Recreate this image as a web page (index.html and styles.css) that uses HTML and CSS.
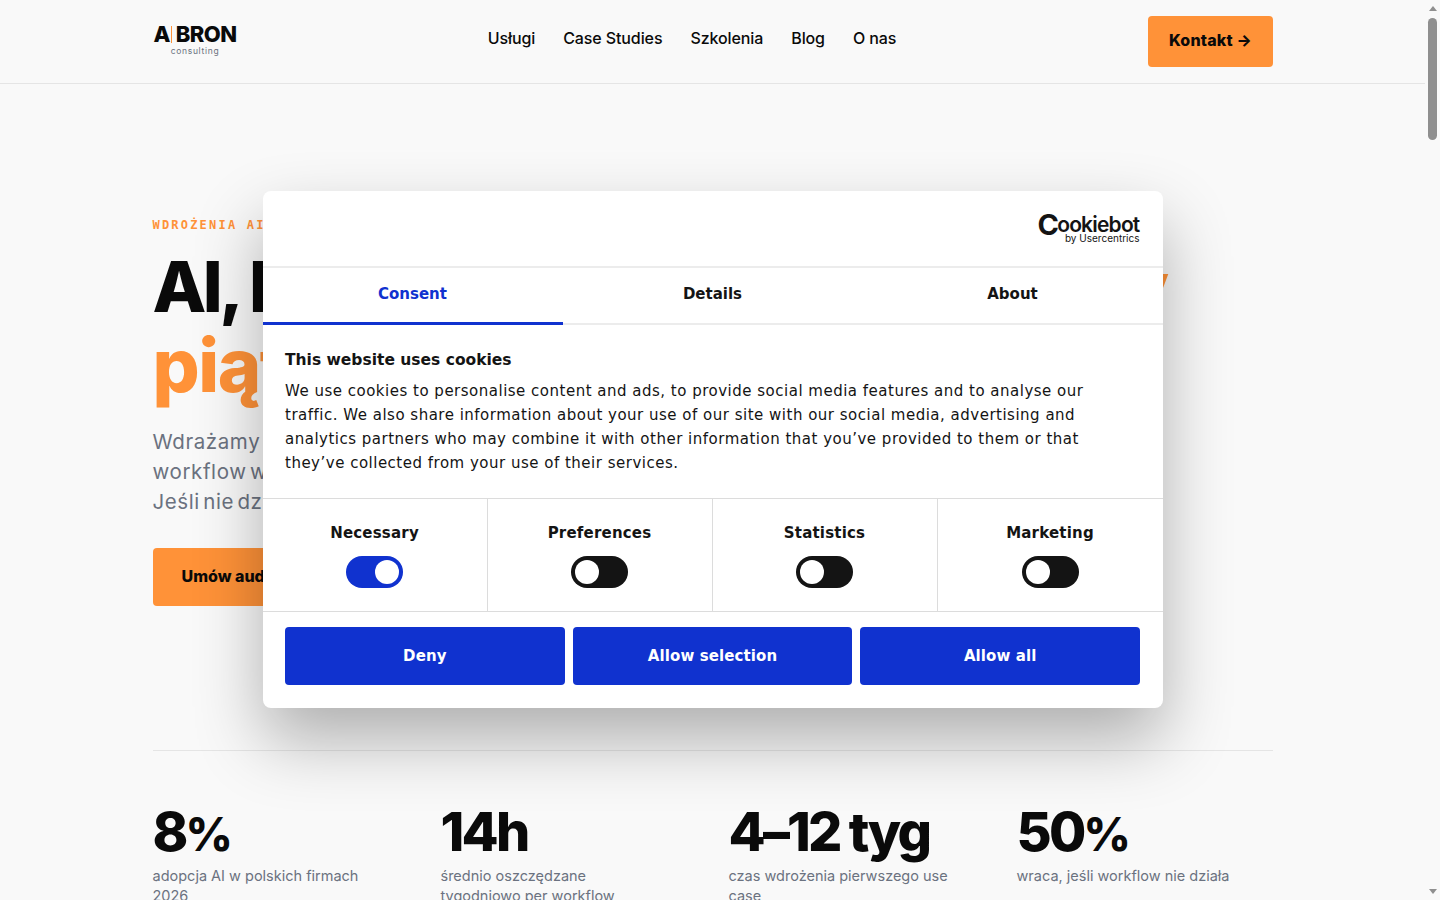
FILE: index.html
```html
<!DOCTYPE html>
<html lang="pl">
<head>
  <meta charset="UTF-8" />
  <meta name="viewport" content="width=device-width, initial-scale=1.0" />
  <title>AIBRON consulting</title>
  <link rel="stylesheet" href="styles.css">
</head>
<body>
  <div class="page">
    <header class="topbar">
      <div class="topbar-inner">
        <a class="logo" href="#">
          <span class="logo-mark">A<span class="logo-bar"></span>BRON</span>
          <span class="logo-sub">consulting</span>
        </a>
        <nav class="nav">
          <a href="#">Usługi</a>
          <a href="#">Case Studies</a>
          <a href="#">Szkolenia</a>
          <a href="#">Blog</a>
          <a href="#">O nas</a>
        </nav>
        <a class="btn-contact" href="#">Kontakt →</a>
      </div>
    </header>

    <main class="wrap">
      <section class="hero">
        <div class="eyebrow">WDROŻENIA AI DLA FIRM</div>
        <h1>AI, które daje Ci <span class="accent">naprawdę wolny<br><span class="line-two">piątek</span></span></h1>
        <p class="lead">Wdrażamy AI w Twoich procesach, tak aby<br>workflow w końcu działał i oszczędzał czas.<br>Jeśli nie działa, zwracamy 50%.</p>
        <a class="btn-hero" href="#">Umów audyt AI →</a>
      </section>

      <section class="stats">
        <div class="stat">
          <div class="stat-num">8<span class="pct">%</span></div>
          <div class="stat-label">adopcja AI w polskich firmach<br>2026</div>
        </div>
        <div class="stat">
          <div class="stat-num">14h</div>
          <div class="stat-label">średnio oszczędzane<br>tygodniowo per workflow</div>
        </div>
        <div class="stat">
          <div class="stat-num">4–12 tyg</div>
          <div class="stat-label">czas wdrożenia pierwszego use<br>case</div>
        </div>
        <div class="stat">
          <div class="stat-num">50<span class="pct">%</span></div>
          <div class="stat-label">wraca, jeśli workflow nie działa</div>
        </div>
      </section>
    </main>

    <div class="overlay">
      <div class="cookie-dialog">
        <div class="cookie-head">
          <div class="cb-logo">
            <span class="cb-name"><span class="cb-c">C</span>ookiebot</span>
            <span class="cb-by">by Usercentrics</span>
          </div>
        </div>
        <div class="cookie-tabs">
          <div class="cookie-tab active">Consent</div>
          <div class="cookie-tab">Details</div>
          <div class="cookie-tab">About</div>
        </div>
        <div class="cookie-body">
          <div class="cookie-title">This website uses cookies</div>
          <p class="cookie-text">We use cookies to personalise content and ads, to provide social media features and to analyse our traffic. We also share information about your use of our site with our social media, advertising and analytics partners who may combine it with other information that you’ve provided to them or that they’ve collected from your use of their services.</p>
        </div>
        <div class="cookie-toggles">
          <div class="toggle-cell">
            <div class="toggle-name">Necessary</div>
            <span class="toggle on"></span>
          </div>
          <div class="toggle-cell">
            <div class="toggle-name">Preferences</div>
            <span class="toggle"></span>
          </div>
          <div class="toggle-cell">
            <div class="toggle-name">Statistics</div>
            <span class="toggle"></span>
          </div>
          <div class="toggle-cell">
            <div class="toggle-name">Marketing</div>
            <span class="toggle"></span>
          </div>
        </div>
        <div class="cookie-actions">
          <button>Deny</button>
          <button>Allow selection</button>
          <button>Allow all</button>
        </div>
      </div>
    </div>
  </div>

  <div class="scrollbar">
    <span class="arrow-up"></span>
    <span class="thumb"></span>
    <span class="arrow-down"></span>
  </div>
</body>
</html>
```

FILE: styles.css
```css
* {
  box-sizing: border-box;
}
html, body {
  height: 100%;
}
body {
  margin: 0;
  display: flex;
  overflow: hidden;
  font-family: 'Inter', 'Noto Sans', sans-serif;
  background: #f9f9f9;
  color: #0a0a0a;
}
a {
  color: inherit;
  text-decoration: none;
}
.page {
  position: relative;
  flex: 1;
  min-width: 0;
  height: 100%;
  overflow: hidden;
}

/* top bar */
.topbar {
  height: 84px;
  border-bottom: 1px solid #e5e5e5;
}
.topbar-inner {
  width: 1120px;
  height: 83px;
  margin-left: 153px;
  display: flex;
  align-items: center;
  justify-content: space-between;
}
.logo {
  width: 84px;
  display: flex;
  flex-direction: column;
  align-items: center;
  margin-top: -2px;
}
.logo-mark {
  display: flex;
  align-items: center;
  font-size: 22px;
  line-height: 20px;
  font-weight: 800;
  letter-spacing: -0.6px;
}
.logo-bar {
  width: 1px;
  height: 17px;
  margin: 0 4px 0 1px;
  background: #ff9238;
}
.logo-sub {
  margin-top: 2px;
  font-size: 8.5px;
  line-height: 11px;
  letter-spacing: 0.7px;
  color: #6b7280;
}
.nav {
  display: flex;
  gap: 28px;
  margin: 0 1px 8px 0;
  font-size: 16px;
  font-weight: 500;
  letter-spacing: -0.1px;
}
.btn-contact {
  width: 125px;
  height: 51px;
  margin-bottom: 1px;
  padding-bottom: 2px;
  display: flex;
  align-items: center;
  justify-content: center;
  background: #ff9238;
  border-radius: 4px;
  font-size: 16px;
  font-weight: 800;
  letter-spacing: 0.2px;
}

/* hero */
.wrap {
  width: 1120px;
  margin: 0 auto;
}
.hero {
  padding-top: 134px;
  height: 667px;
  border-bottom: 1px solid #e5e5e5;
}
.eyebrow {
  font-family: 'DejaVu Sans Mono', monospace;
  font-size: 12px;
  line-height: 14px;
  font-weight: 700;
  letter-spacing: 2.2px;
  color: #ff9238;
}
h1 {
  margin: 16px 0 0;
  font-size: 70px;
  line-height: 78px;
  font-weight: 800;
  letter-spacing: -3.56px;
  white-space: nowrap;
}
.accent {
  color: #ff9238;
}
.line-two {
  font-size: 74px;
  letter-spacing: -1.5px;
}
.lead {
  margin: 21px 0 0;
  font-size: 20.5px;
  line-height: 30px;
  letter-spacing: 0.6px;
  word-spacing: -3px;
  color: #6b7280;
}
.btn-hero {
  display: inline-flex;
  align-items: center;
  height: 58px;
  margin-top: 31px;
  padding: 0 29px 2px;
  background: #ff9238;
  border-radius: 4px;
  font-size: 16px;
  font-weight: 800;
}

/* stats */
.stats {
  display: grid;
  grid-template-columns: repeat(4, 1fr);
  gap: 32px;
  padding-top: 49px;
}
.stat-num {
  height: 64px;
  font-size: 54px;
  line-height: 64px;
  font-weight: 800;
  letter-spacing: -2.8px;
}
.pct {
  font-size: 46px;
}
.stat-label {
  margin-top: 2px;
  font-size: 14.5px;
  line-height: 19.5px;
  color: #6b7280;
}

/* cookie dialog */
.overlay {
  position: absolute;
  inset: 0;
  display: flex;
  justify-content: center;
  align-items: flex-start;
  padding-top: 191px;
}
.cookie-dialog {
  width: 900px;
  height: 517px;
  background: #fff;
  border-radius: 8px;
  box-shadow: 0 32px 68px rgba(0,0,0,0.3);
  font-family: 'DejaVu Sans', sans-serif;
  color: #141414;
  overflow: hidden;
}
.cookie-head {
  height: 77px;
  padding: 23px 23px 0 0;
  display: flex;
  justify-content: flex-end;
  border-bottom: 2px solid #ececec;
}
.cb-logo {
  display: flex;
  flex-direction: column;
  align-items: flex-end;
  font-family: 'Inter', sans-serif;
  color: #141414;
}
.cb-name {
  font-size: 21px;
  line-height: 22px;
  font-weight: 600;
  letter-spacing: -0.8px;
}
.cb-c {
  font-size: 29px;
  line-height: 0;
  font-weight: 700;
  margin-right: -1px;
  vertical-align: -3px;
}
.cb-by {
  margin-top: -4px;
  font-size: 10px;
  line-height: 12px;
}
.cookie-tabs {
  display: grid;
  grid-template-columns: repeat(3, 1fr);
  height: 57px;
  border-bottom: 2px solid #ececec;
}
.cookie-tab {
  height: 57px;
  padding-top: 16px;
  text-align: center;
  font-size: 15px;
  line-height: 20px;
  font-weight: 700;
}
.cookie-tab.active {
  color: #1032cf;
  border-bottom: 3px solid #1032cf;
}
.cookie-body {
  height: 174px;
  padding: 25px 22.5px 0;
  border-bottom: 1px solid #dcdcdc;
}
.cookie-title {
  font-size: 15.5px;
  line-height: 20px;
  font-weight: 700;
}
.cookie-text {
  margin: 9px 0 0;
  font-size: 15px;
  line-height: 24px;
  letter-spacing: 0.5px;
}
.cookie-toggles {
  display: grid;
  grid-template-columns: repeat(4, 1fr);
  height: 113px;
  border-bottom: 1px solid #dcdcdc;
}
.toggle-cell {
  padding-top: 24px;
  display: flex;
  flex-direction: column;
  align-items: center;
  border-right: 1px solid #dcdcdc;
}
.toggle-cell:last-child {
  border-right: none;
}
.toggle-name {
  font-size: 15px;
  line-height: 20px;
  font-weight: 700;
  letter-spacing: 0.2px;
}
.toggle {
  position: relative;
  width: 57px;
  height: 32px;
  margin-top: 13px;
  border-radius: 32px;
  background: #141414;
}
.toggle::after {
  content: "";
  position: absolute;
  top: 4px;
  left: 4px;
  width: 24px;
  height: 24px;
  border-radius: 50%;
  background: #fff;
}
.toggle.on {
  background: #1032cf;
}
.toggle.on::after {
  left: 29px;
}
.cookie-actions {
  display: flex;
  gap: 8px;
  padding: 15px 22.5px 0;
}
.cookie-actions button {
  flex: 1;
  height: 58px;
  border: none;
  border-radius: 4px;
  background: #1032cf;
  color: #fff;
  font-family: 'DejaVu Sans', sans-serif;
  font-size: 15px;
  font-weight: 700;
  letter-spacing: 0.1px;
}

/* scrollbar */
.scrollbar {
  flex: 0 0 15px;
  height: 100%;
  display: flex;
  flex-direction: column;
  align-items: center;
  background: #f9f9f9;
}
.arrow-up, .arrow-down {
  width: 0;
  height: 0;
  border-left: 4px solid transparent;
  border-right: 4px solid transparent;
}
.arrow-up {
  margin-top: 6px;
  border-bottom: 5px solid #8f8f8f;
}
.arrow-down {
  margin-top: auto;
  margin-bottom: 6px;
  border-top: 5px solid #8f8f8f;
}
.thumb {
  width: 9px;
  height: 122px;
  margin-top: 7px;
  border-radius: 5px;
  background: #8f8f8f;
}
```
